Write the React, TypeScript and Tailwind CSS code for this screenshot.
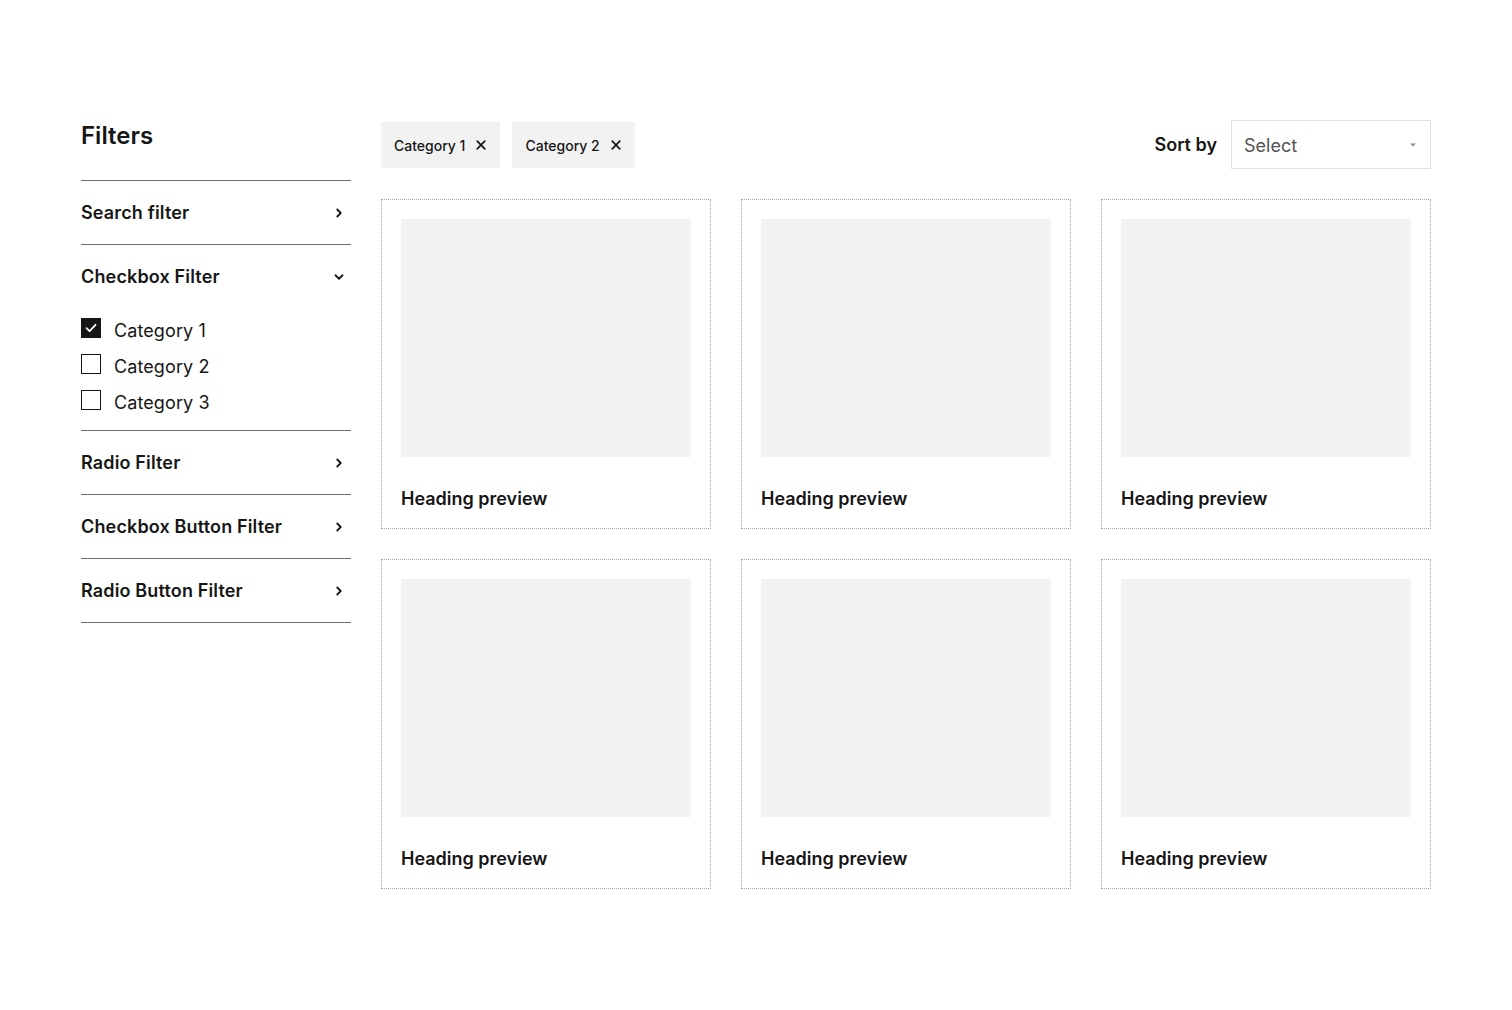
import React from "react";

const Chevron = ({ down = false }: { down?: boolean }) => (
  <svg width="16" height="16" viewBox="0 0 16 16" fill="none" className="text-[#161616]">
    {down ? (
      <path d="M4.5 6.25L8 9.75L11.5 6.25" stroke="currentColor" strokeWidth="1.8" strokeLinecap="round" strokeLinejoin="round" />
    ) : (
      <path d="M6.25 4.5L9.75 8L6.25 11.5" stroke="currentColor" strokeWidth="1.8" strokeLinecap="round" strokeLinejoin="round" />
    )}
  </svg>
);

const Row = ({ label, down = false }: { label: string; down?: boolean }) => (
  <div className="flex h-[63px] items-center justify-between pr-[4px]">
    <span className="text-[18px] font-semibold tracking-[0.15px] text-[#161616]">{label}</span>
    <Chevron down={down} />
  </div>
);

const Check = ({ checked, label }: { checked?: boolean; label: string }) => (
  <div className="flex h-[36px] items-center gap-[13px]">
    {checked ? (
      <span className="flex h-[20px] w-[20px] items-center justify-center bg-[#161616]">
        <svg width="14" height="14" viewBox="0 0 14 14" fill="none">
          <path d="M2.5 7.2L5.6 10.2L11.5 3.8" stroke="white" strokeWidth="1.8" strokeLinecap="round" strokeLinejoin="round" />
        </svg>
      </span>
    ) : (
      <span className="h-[20px] w-[20px] border border-[#161616]" />
    )}
    <span className="pt-[4px] text-[18px] text-[#161616] tracking-[0.1px]">{label}</span>
  </div>
);

const Chip = ({ label }: { label: string }) => (
  <div className="flex h-[46px] items-center gap-[10px] bg-[#f2f2f2] pl-[13px] pr-[13px]">
    <span className="text-[14px] font-medium text-[#161616]">{label}</span>
    <svg width="12" height="12" viewBox="0 0 12 12" fill="none">
      <path d="M2.2 2.2L9.8 9.8M9.8 2.2L2.2 9.8" stroke="#161616" strokeWidth="1.7" strokeLinecap="round" />
    </svg>
  </div>
);

const Card = () => (
  <div className="flex h-[330px] flex-col border border-dotted border-[#a8a8a8] p-[19px]">
    <div className="h-[238px] w-full shrink-0 bg-[#f2f2f2]" />
    <div className="mt-[30px] text-[18px] font-semibold leading-[24px] text-[#161616]">Heading preview</div>
  </div>
);

export default function App() {
  return (
    <div className="min-h-[1010px] bg-white" style={{ fontFamily: "Inter, 'Liberation Sans', sans-serif" }}>
      <div className="mx-auto flex w-[1350px] gap-[30px] pt-[120px]">
        <aside className="w-[270px] shrink-0">
          <h2 className="text-[24px] font-semibold leading-[32px] text-[#161616]">Filters</h2>
          <div className="mt-[28px] border-t border-[#6f6f6f]">
            <Row label="Search filter" />
          </div>
          <div className="border-t border-[#6f6f6f] pb-[12px]">
            <Row label="Checkbox Filter" down />
            <div className="mt-[2px]">
              <Check checked label="Category 1" />
              <Check label="Category 2" />
              <Check label="Category 3" />
            </div>
          </div>
          <div className="border-t border-[#6f6f6f]">
            <Row label="Radio Filter" />
          </div>
          <div className="border-t border-[#6f6f6f]">
            <Row label="Checkbox Button Filter" />
          </div>
          <div className="border-t border-b border-[#6f6f6f]">
            <Row label="Radio Button Filter" />
          </div>
        </aside>
        <main className="flex-1">
          <div className="flex h-[49px] items-center justify-between">
            <div className="flex gap-[12px] pt-[1px]">
              <Chip label="Category 1" />
              <Chip label="Category 2" />
            </div>
            <div className="flex items-center gap-[14px]">
              <span className="text-[18px] font-semibold text-[#161616]">Sort by</span>
              <div className="flex h-[49px] w-[200px] items-center justify-between border border-[#e0e0e0] pl-[12px] pr-[12px]">
                <span className="pt-[1px] text-[18px] text-[#525252]">Select</span>
                <svg width="10" height="10" viewBox="0 0 10 10">
                  <path d="M2 3.5L8 3.5L5 6.5Z" fill="#8d8d8d" />
                </svg>
              </div>
            </div>
          </div>
          <div className="mt-[30px] grid grid-cols-3 gap-[30px]">
            <Card />
            <Card />
            <Card />
            <Card />
            <Card />
            <Card />
          </div>
        </main>
      </div>
    </div>
  );
}
